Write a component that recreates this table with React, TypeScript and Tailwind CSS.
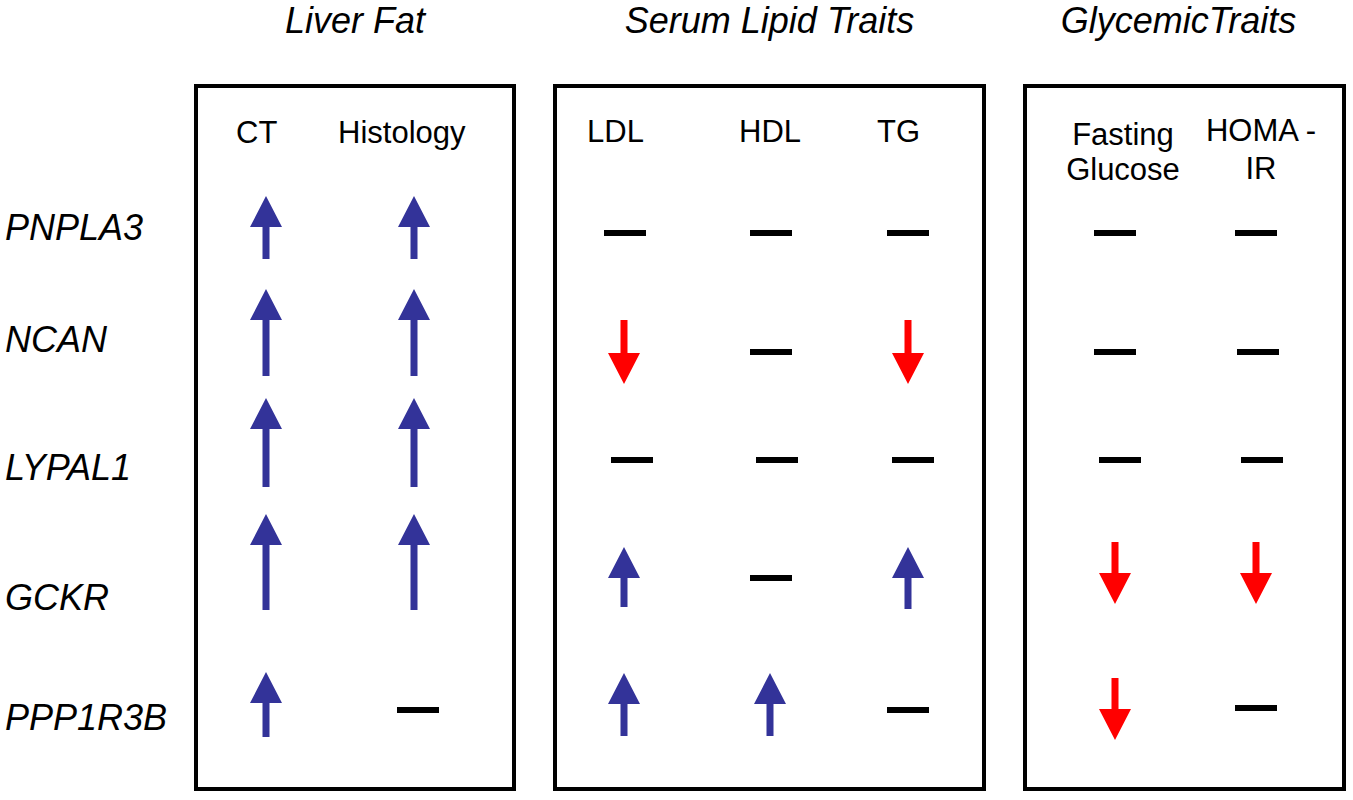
import React from "react";

type Glyph =
  | { t: "up"; cls: string; h: number }
  | { t: "down"; cls: string; h: number }
  | { t: "dash"; cls: string };

const BLUE = "#333399";
const RED = "#ff0000";

function Arrow({ dir, h }: { dir: "up" | "down"; h: number }) {
  const W = 32;
  const head = 31;
  const s1 = 12.5;
  const s2 = 19.5;
  const pts =
    dir === "up"
      ? `16,0 ${W},${head} ${s2},${head} ${s2},${h} ${s1},${h} ${s1},${head} 0,${head}`
      : `${s1},0 ${s2},0 ${s2},${h - head} ${W},${h - head} 16,${h} 0,${h - head} ${s1},${h - head}`;
  return (
    <svg width={W} height={h} viewBox={`0 0 ${W} ${h}`} className="block">
      <polygon points={pts} fill={dir === "up" ? BLUE : RED} />
    </svg>
  );
}

function Cell({ g, cls }: { g: Glyph; cls: string }) {
  return (
    <div className={`w-[96px] h-full flex flex-col items-center ${cls}`}>
      {g.t === "dash" ? (
        <div className={`w-[42px] h-[6px] bg-black ${g.cls}`} />
      ) : (
        <div className={g.cls}>
          <Arrow dir={g.t} h={g.h} />
        </div>
      )}
    </div>
  );
}

const bands = ["h-[100px]", "h-[110px]", "h-[110px]", "h-[130px]", "h-[157px]"];

const box1: Glyph[][] = [
  [
    { t: "up", cls: "mt-[16px]", h: 63 },
    { t: "up", cls: "mt-[16px]", h: 63 },
  ],
  [
    { t: "up", cls: "mt-[9px]", h: 87 },
    { t: "up", cls: "mt-[9px]", h: 87 },
  ],
  [
    { t: "up", cls: "mt-[8px]", h: 89 },
    { t: "up", cls: "mt-[8px]", h: 89 },
  ],
  [
    { t: "up", cls: "mt-[14px]", h: 96 },
    { t: "up", cls: "mt-[14px]", h: 96 },
  ],
  [
    { t: "up", cls: "mt-[42px]", h: 65 },
    { t: "dash", cls: "mt-[77px] translate-x-[4px]" },
  ],
];

const box2: Glyph[][] = [
  [
    { t: "dash", cls: "mt-[50px] translate-x-[1px]" },
    { t: "dash", cls: "mt-[50px]" },
    { t: "dash", cls: "mt-[50px]" },
  ],
  [
    { t: "down", cls: "mt-[40px]", h: 64 },
    { t: "dash", cls: "mt-[69px]" },
    { t: "down", cls: "mt-[40px]", h: 64 },
  ],
  [
    { t: "dash", cls: "mt-[67px] translate-x-[8px]" },
    { t: "dash", cls: "mt-[67px] translate-x-[6px]" },
    { t: "dash", cls: "mt-[67px] translate-x-[5px]" },
  ],
  [
    { t: "up", cls: "mt-[47px]", h: 60 },
    { t: "dash", cls: "mt-[75px]" },
    { t: "up", cls: "mt-[47px]", h: 62 },
  ],
  [
    { t: "up", cls: "mt-[43px]", h: 63 },
    { t: "up", cls: "mt-[43px] -translate-x-[1px]", h: 63 },
    { t: "dash", cls: "mt-[77px]" },
  ],
];

const box3: Glyph[][] = [
  [
    { t: "dash", cls: "mt-[50px]" },
    { t: "dash", cls: "mt-[50px]" },
  ],
  [
    { t: "dash", cls: "mt-[69px]" },
    { t: "dash", cls: "mt-[69px] translate-x-[2px]" },
  ],
  [
    { t: "dash", cls: "mt-[67px] translate-x-[5px]" },
    { t: "dash", cls: "mt-[67px] translate-x-[6px]" },
  ],
  [
    { t: "down", cls: "mt-[42px]", h: 62 },
    { t: "down", cls: "mt-[42px]", h: 62 },
  ],
  [
    { t: "down", cls: "mt-[48px]", h: 62 },
    { t: "dash", cls: "mt-[75px]" },
  ],
];

const genes = [
  { name: "PNPLA3", cls: "mt-[30px]" },
  { name: "NCAN", cls: "mt-[42px]" },
  { name: "LYPAL1", cls: "mt-[60px]" },
  { name: "GCKR", cls: "mt-[80px]" },
  { name: "PPP1R3B", cls: "mt-[70px]" },
];

function Rows({ data, cellCls }: { data: Glyph[][]; cellCls: string[] }) {
  return (
    <>
      {data.map((row, i) => (
        <div key={i} className={`flex ${bands[i]}`}>
          {row.map((g, j) => (
            <Cell key={j} g={g} cls={cellCls[j]} />
          ))}
        </div>
      ))}
    </>
  );
}

export default function App() {
  return (
    <div className="w-[1353px] h-[800px] bg-white overflow-hidden text-black font-['Liberation_Sans',Arial,Helvetica,sans-serif]">
      {/* Group titles */}
      <div className="flex h-[84px] italic text-[36px] leading-none whitespace-nowrap pt-[3px]">
        <div className="w-[194px] shrink-0" />
        <div className="w-[322px] shrink-0 text-center">Liver Fat</div>
        <div className="w-[433px] shrink-0 ml-[37px] text-center">Serum Lipid Traits</div>
        <div className="w-[323px] shrink-0 ml-[37px] text-center -translate-x-[6px]">GlycemicTraits</div>
      </div>

      <div className="flex">
        {/* Gene labels */}
        <div className="w-[194px] shrink-0 pt-[96px] pl-[5px]">
          {genes.map((g, i) => (
            <div key={g.name} className={`flex flex-col ${bands[i]}`}>
              <div className={`text-[36px] leading-none italic whitespace-nowrap ${g.cls}`}>{g.name}</div>
            </div>
          ))}
        </div>

        {/* Liver Fat */}
        <div className="w-[322px] h-[707px] shrink-0 border-4 border-black">
          <div className="h-[92px] flex text-[31px] leading-[35px] whitespace-nowrap">
            <div className="ml-[38px] mt-[27px] w-[102px]">CT</div>
            <div className="mt-[27px]">Histology</div>
          </div>
          <Rows data={box1} cellCls={["ml-[20px]", "ml-[52px]"]} />
        </div>

        {/* Serum Lipid Traits */}
        <div className="w-[433px] h-[707px] shrink-0 ml-[37px] border-4 border-black">
          <div className="h-[92px] flex text-[31px] leading-[35px] whitespace-nowrap">
            <div className="ml-[30px] mt-[26px] w-[152px]">LDL</div>
            <div className="mt-[26px] w-[138px]">HDL</div>
            <div className="mt-[26px]">TG</div>
          </div>
          <Rows data={box2} cellCls={["ml-[19px]", "ml-[51px]", "ml-[41px]"]} />
        </div>

        {/* Glycemic Traits */}
        <div className="w-[323px] h-[707px] shrink-0 ml-[37px] border-4 border-black">
          <div className="h-[92px] flex text-[31px] leading-[35px] whitespace-nowrap">
            <div className="ml-[31px] mt-[29px] w-[130px] text-center">
              Fasting
              <br />
              Glucose
            </div>
            <div className="ml-[8px] mt-[24px] w-[130px] text-center leading-[38px]">
              HOMA -
              <br />
              IR
            </div>
          </div>
          <Rows data={box3} cellCls={["ml-[40px]", "ml-[45px]"]} />
        </div>
      </div>
    </div>
  );
}
